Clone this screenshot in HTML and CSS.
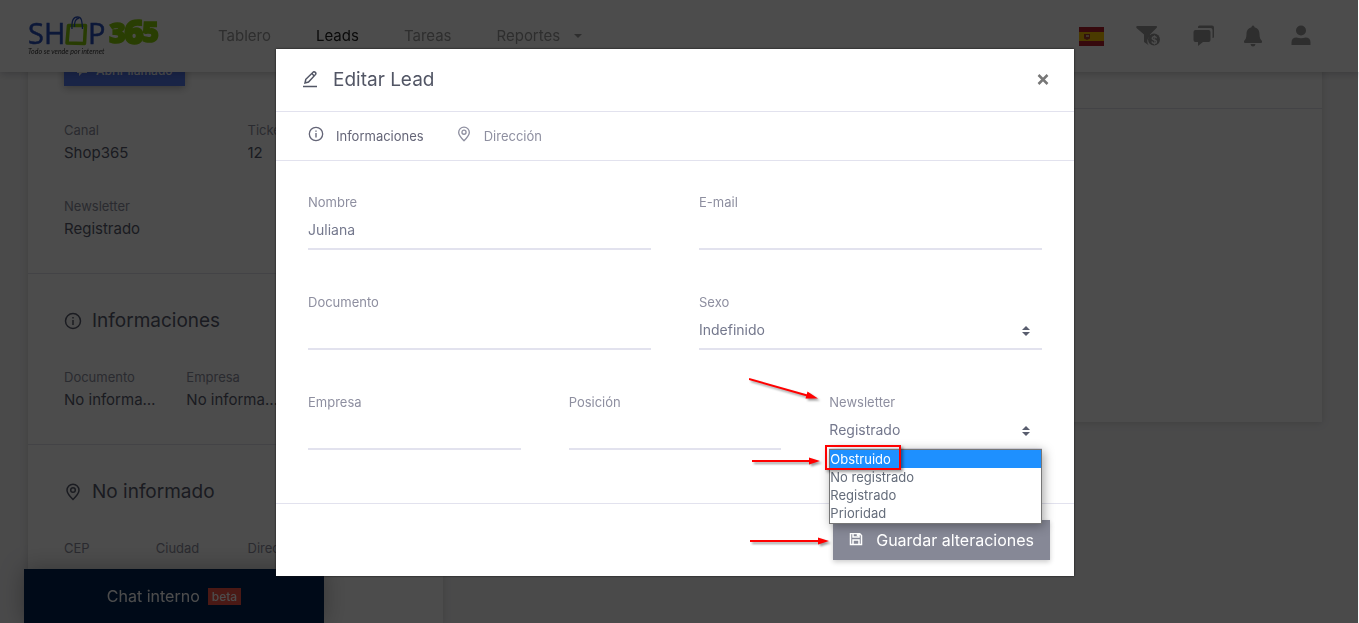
FILE: index.html
```html
<!DOCTYPE html>
<html lang="es">
<head>
<meta charset="utf-8">
<meta name="viewport" content="width=device-width, initial-scale=1">
<title>Editar Lead</title>
<link rel="stylesheet" href="styles.css">
</head>
<body>
<header class="topbar">
  <a class="logo" href="#" aria-label="Shop365">
    <svg width="140" height="60" viewBox="0 -10 140 60">
      <g class="logo-navy">
        <text x="0" y="28" font-size="29">SH</text>
        <text x="60" y="28" font-size="29">P</text>
      </g>
      <path d="M40.500 9.500L57.500 9.500 56.500 27.500 39 27Z" fill="none" stroke="#86c90a" stroke-width="3.500" stroke-linejoin="round"/>
      <path d="M44 13C43.500 4 45.500 1 49.500 1S54 4 54.500 13M46.500 11C46.500 6 47 3 51 2" fill="none" stroke="#2b50bb" stroke-width="1.300"/>
      <text class="logo-green" x="81" y="27" font-size="29">3</text>
      <text class="logo-green" x="96" y="28" font-size="34">6</text>
      <text class="logo-green" x="114" y="26" font-size="29">5</text>
      <text class="logo-tag" x="0" y="38" font-size="7">Todo se vende por internet</text>
    </svg>
  </a>
  <nav class="nav">
    <a href="#">Tablero</a>
    <a href="#" class="current">Leads</a>
    <a href="#">Tareas</a>
    <a href="#" class="more">Reportes</a>
  </nav>
  <div class="tools">
    <button type="button" class="wide" aria-label="Idioma"><svg width="25" height="19" viewBox="0 0 25 19"><path fill="#b5202c" d="M0 0h25v19H0z"/><path fill="#f8c200" d="M0 5h25v9H0z"/><path fill="#a8402a" d="M5 7h6v4.500l-3 1.500-3-1.500z"/><path fill="#d8b090" d="M7 8h3v2H7z"/></svg></button>
    <button type="button" class="wide" aria-label="Filtro"><svg width="25" height="22" viewBox="0 0 25 22"><path d="M1 1h19.500q1 1 0 2l-6.500 6.500V11a6.300 6.300 0 0 0-1 9.500L8 17V9.500L.5 3Q-.2 1.500 1 1z"/><circle cx="18" cy="14.500" r="6"/><text x="15" y="18.500" class="coin">$</text></svg></button>
    <button type="button" aria-label="Mensajes"><svg width="22" height="22" viewBox="0 0 22 22"><path d="M2.500 5h13a2 2 0 0 1 2 2v8a2 2 0 0 1-2 2H10l-5 4v-4H2.500a2 2 0 0 1-2-2V7a2 2 0 0 1 2-2z"/><path d="M5 3V2a1.500 1.500 0 0 1 1.500-1.500H19A2 2 0 0 1 21 2.500V12q0 1-1.500 1V5Q19.500 3 17.500 3z"/></svg></button>
    <button type="button" aria-label="Avisos"><svg width="20" height="22" viewBox="0 0 20 22"><path d="M10 .5q1.500 0 1.500 1.700C15 3 16.500 6 16.500 9c0 4 1 5.500 2.500 7q.5 2-1 2H2q-1.500 0-1-2c1.500-1.500 2.500-3 2.500-7 0-3 1.500-6 5-6.800Q8.500.5 10 .5zM7.500 19h5q-.5 2.500-2.500 2.500T7.500 19z"/></svg></button>
    <button type="button" aria-label="Usuario"><svg width="20" height="22" viewBox="0 0 20 22"><circle cx="10" cy="5.500" r="5"/><path d="M.5 20v-2.500q0-5 5-5 4.500 1.500 9 0 5 0 5 5V20H.5z"/></svg></button>
  </div>
</header>

<main class="page">
  <section class="card lead">
    <div class="block first">
      <button type="button" class="call"><svg width="12" height="12" viewBox="0 0 12 12"><path fill="#fff" d="M1 2h10v6H6l-3 3V8H1z"/></svg>Abrir llamado</button>
      <dl class="facts two">
        <div><dt>Canal</dt><dd>Shop365</dd></div>
        <div><dt>Ticket</dt><dd>12</dd></div>
        <div><dt>Newsletter</dt><dd>Registrado</dd></div>
      </dl>
    </div>
    <div class="block">
      <h2><svg class="line-icon" width="18" height="18" viewBox="0 0 18 18"><circle cx="9" cy="9" r="7.500"/><path d="M9 8v5M9 5v1.500"/></svg>Informaciones</h2>
      <dl class="facts three">
        <div><dt>Documento</dt><dd>No informado</dd></div>
        <div><dt>Empresa</dt><dd>No informado</dd></div>
      </dl>
    </div>
    <div class="block last">
      <h2><svg class="line-icon" width="18" height="18" viewBox="0 0 18 18"><path d="M9 16.500C6 13.500 3 10.500 3 7.200a6 6 0 0 1 12 0c0 3.300-3 6.300-6 9.300z"/><circle cx="9" cy="7" r="2.300"/></svg>No informado</h2>
      <dl class="facts four">
        <div><dt>CEP</dt></div>
        <div><dt>Ciudad</dt></div>
        <div><dt>Dirección</dt></div>
      </dl>
    </div>
  </section>
  <section class="card activity"><div class="activity-head"></div></section>
</main>

<button type="button" class="chat">Chat interno <span class="beta">beta</span></button>

<div class="backdrop">
  <form class="modal" role="dialog" aria-labelledby="modal-title">
    <div class="modal-head">
      <svg class="line-icon" width="18" height="18" viewBox="0 0 18 18"><path d="M4 12l.8-3.700 7.500-7.300q1-.6 2 .4t.3 2L7.500 11zM10.800 2.500l2.500 2.500M2 15.500h14"/></svg>
      <h1 id="modal-title">Editar Lead</h1>
      <button type="button" class="close" aria-label="Cerrar"><svg width="12" height="12" viewBox="0 0 12 12"><path d="M1.500 1l9 9M10.500 1l-9 9"/></svg></button>
    </div>
    <div class="tabs">
      <a href="#" class="active"><svg class="line-icon" width="16" height="16" viewBox="0 0 18 18"><circle cx="9" cy="9" r="7.500"/><path d="M9 8v5M9 5v1.500"/></svg>Informaciones</a>
      <a href="#"><svg class="line-icon" width="16" height="16" viewBox="0 0 18 18"><path d="M9 16.500C6 13.500 3 10.500 3 7.200a6 6 0 0 1 12 0c0 3.300-3 6.300-6 9.300z"/><circle cx="9" cy="7" r="2.300"/></svg>Dirección</a>
    </div>
    <div class="modal-body">
      <div class="field half"><label for="nombre">Nombre</label><input id="nombre" type="text" value="Juliana"></div>
      <div class="field half"><label for="email">E-mail</label><input id="email" type="email"></div>
      <div class="field half"><label for="documento">Documento</label><input id="documento" type="text"></div>
      <div class="field half">
        <label for="sexo">Sexo</label>
        <div class="select"><select id="sexo"><option>Indefinido</option></select><svg width="8" height="10" viewBox="0 0 8 10"><path d="M0 4l4-4 4 4zM0 6h8l-4 4z"/></svg></div>
      </div>
      <div class="field third"><label for="empresa">Empresa</label><input id="empresa" type="text"></div>
      <div class="field third"><label for="posicion">Posición</label><input id="posicion" type="text"></div>
      <div class="field third">
        <label for="newsletter">Newsletter</label>
        <div class="select"><select id="newsletter"><option>Registrado</option></select><svg width="8" height="10" viewBox="0 0 8 10"><path d="M0 4l4-4 4 4zM0 6h8l-4 4z"/></svg></div>
        <ul class="options" role="listbox" aria-label="Newsletter">
          <li role="option" aria-selected="true">Obstruido</li>
          <li role="option">No registrado</li>
          <li role="option">Registrado</li>
          <li role="option">Prioridad</li>
        </ul>
        <div class="highlight"></div>
        <svg class="arrows" width="90" height="180" viewBox="0 0 90 180" aria-hidden="true">
          <path d="M0 6L60 23M3 88h58M1 168h68" stroke="#f00" stroke-width="2"/>
          <path d="M69 25.500L56.500 25.500 58.500 18.500ZM71 88L60 84.500V91.500ZM80 168L69 164.500V171.500Z" fill="#f00"/>
        </svg>
      </div>
    </div>
    <div class="modal-foot">
      <button type="submit" class="save"><svg width="14" height="14" viewBox="0 0 14 14"><path d="M1.500.5h9l2 2v9h-11zM4 .5v3.500h6V.5M4 11.500V7h6v4.500M8.500 1v2" fill="none" stroke="#fff" stroke-width="1.500"/></svg>Guardar alteraciones</button>
    </div>
  </form>
</div>
</body>
</html>
```
FILE: styles.css
```css
* { box-sizing: border-box; }
body {
  margin: 0;
  height: 100vh;
  overflow: hidden;
  background: #f7f7f9;
  color: #595d6e;
  font: 15px/24px Inter, "Open Sans", sans-serif;
}
a { color: inherit; text-decoration: none; }
button { font: inherit; border: 0; cursor: pointer; }
h1, h2, dl, dd, ul { margin: 0; padding: 0; }
.line-icon { flex: none; fill: none; stroke: currentColor; stroke-width: 1.500; }

.topbar {
  position: fixed;
  inset: 0 0 auto;
  z-index: 1;
  display: flex;
  align-items: center;
  height: 72px;
  padding: 0 48px 0 28px;
  background: #fff;
  box-shadow: 0 1px 9px rgba(0, 0, 0, .25);
}
.logo { display: flex; width: 190px; }
.logo-navy { fill: #2b50bb; stroke: #2b50bb; stroke-width: .5; font-family: "Open Sans", sans-serif; }
.logo-green { fill: #8bd00a; stroke: #8bd00a; stroke-width: 1.500; font-family: "Open Sans", sans-serif; font-weight: 800; }
.logo-tag { fill: #333; font-family: Lato, "Liberation Sans", sans-serif; font-style: italic; }
.nav { display: flex; gap: 45px; flex: 1; color: #999; }
.nav .current { color: #222; }
.more::after {
  content: "";
  display: inline-block;
  margin-left: 14px;
  border: 4px solid transparent;
  border-top-color: currentColor;
  border-bottom: 0;
  vertical-align: 3px;
}
.tools { display: flex; align-items: center; gap: 28px; }
.tools button { display: flex; padding: 0; background: none; }
.tools .wide { margin-right: 4px; }
.tools svg { fill: #999; }
.coin { font-size: 10px; font-weight: 700; fill: #fff; }

.page { display: flex; align-items: flex-start; gap: 25px; padding: 0 37px 0 28px; }
.card { background: #fff; box-shadow: 0 1px 8px rgba(0, 0, 0, .15); }
.lead { flex: 415; height: 100vh; overflow: hidden; }
.activity { flex: 854; height: 422px; }
.activity-head { height: 109px; border-bottom: 1px solid #e2e2ea; }
.block { padding: 32px 12px 31px 36px; border-bottom: 1px solid #e2e2ea; }
.first { padding-top: 54px; }
.last { border-bottom: 0; }
.call {
  display: flex;
  align-items: center;
  gap: 8px;
  height: 32px;
  margin-bottom: 34px;
  padding: 2px 12px 0;
  background: #5578eb;
  box-shadow: 0 2px 8px rgba(0, 0, 0, .3);
  color: #fff;
  font-size: 12px;
  font-weight: 500;
}
.block h2 {
  display: flex;
  align-items: center;
  gap: 10px;
  margin-bottom: 31px;
  font-size: 19px;
  font-weight: 400;
  line-height: 30px;
}
.facts { display: grid; row-gap: 30px; }
.facts > div { min-width: 0; padding-right: 28px; }
.two { grid-template-columns: repeat(2, 1fr); }
.three { grid-template-columns: repeat(3, 1fr); }
.four { grid-template-columns: repeat(4, 1fr); }
.four > div { padding-right: 0; }
dt { color: #8e8fa0; font-size: 13px; line-height: 20px; }
dd { overflow: hidden; text-overflow: ellipsis; white-space: nowrap; line-height: 26px; }

.chat {
  position: fixed;
  left: 24px;
  bottom: 0;
  display: flex;
  justify-content: center;
  align-items: center;
  gap: 8px;
  width: 300px;
  height: 54px;
  background: #002352;
  box-shadow: 0 0 24px rgba(0, 0, 0, .3);
  color: #fff;
  font-size: 16px;
}
.beta { padding: 0 4px; background: #f95548; font-size: 12px; line-height: 17px; font-weight: 500; }

.backdrop {
  position: fixed;
  inset: 0 1px 0 0;
  z-index: 2;
  display: flex;
  justify-content: center;
  align-items: flex-start;
  padding: 49px 8px 0 0;
  background: rgba(0, 0, 0, .7);
}
.modal { width: 100%; max-width: 798px; background: #fff; box-shadow: 0 0 2px #111; color: #646c7a; }
.modal-head {
  display: flex;
  align-items: center;
  gap: 14px;
  padding: 16px 25px;
  border-bottom: 1px solid #e2e2ee;
  color: #525665;
}
.modal-head h1 { flex: 1; font-size: 19px; font-weight: 400; line-height: 30px; }
.close { display: flex; padding: 0; background: none; }
.close path { stroke: #777; stroke-width: 2.500; }
.tabs { display: flex; gap: 32px; padding: 12px 32px; border-bottom: 1px solid #e2e2ee; color: #8e8fa0; font-size: 13px; }
.tabs a { display: flex; align-items: center; gap: 12px; }
.tabs svg { margin-bottom: 4px; }
.tabs .active { color: #646577; }
.modal-body { display: grid; grid-template-columns: repeat(6, 1fr); gap: 43px 48px; padding: 32px 32px 53px; }
.field { position: relative; min-width: 0; }
.half { grid-column: span 3; }
.third { grid-column: span 2; }
.field label { display: block; color: #8e8fa0; font-size: 13px; line-height: 18px; }
.field input, .field select {
  display: block;
  width: 100%;
  height: 39px;
  padding: 0;
  border: 0;
  border-bottom: 2px solid #e2e2ee;
  border-radius: 0;
  outline: 0;
  background: none;
  color: #74788d;
  font: inherit;
  font-size: 14px;
  appearance: none;
}
.select { display: grid; align-items: center; }
.select > * { grid-area: 1 / 1; }
.select svg { justify-self: end; margin-right: 12px; fill: #595d6e; pointer-events: none; }
.options {
  position: absolute;
  top: 56px;
  left: 0;
  right: 0;
  z-index: 1;
  padding-bottom: 1px;
  border: 1px solid #767676;
  background: #fff;
  box-shadow: 2px 2px 10px rgba(0, 0, 0, .35);
  list-style: none;
  font-size: 13px;
  line-height: 18px;
}
.options [aria-selected] { background: #1e90ff; color: #fff; }
.highlight {
  position: absolute;
  top: 52px;
  left: -4px;
  z-index: 2;
  width: 76px;
  height: 25px;
  border: 2px solid #f00;
  box-shadow: 2px 2px 3px rgba(0, 0, 0, .4);
}
.arrows { position: absolute; top: -20px; left: -80px; filter: drop-shadow(2px 2px 1px rgba(0, 0, 0, .4)); pointer-events: none; }
.modal-foot { display: flex; justify-content: flex-end; padding: 16px 24px; border-top: 1px solid #e2e2ee; }
.save {
  display: flex;
  align-items: center;
  gap: 13px;
  height: 40px;
  padding: 0 16px;
  background: #868896;
  box-shadow: 0 2px 5px rgba(0, 0, 0, .2);
  color: #fff;
  font-size: 16px;
}
```
